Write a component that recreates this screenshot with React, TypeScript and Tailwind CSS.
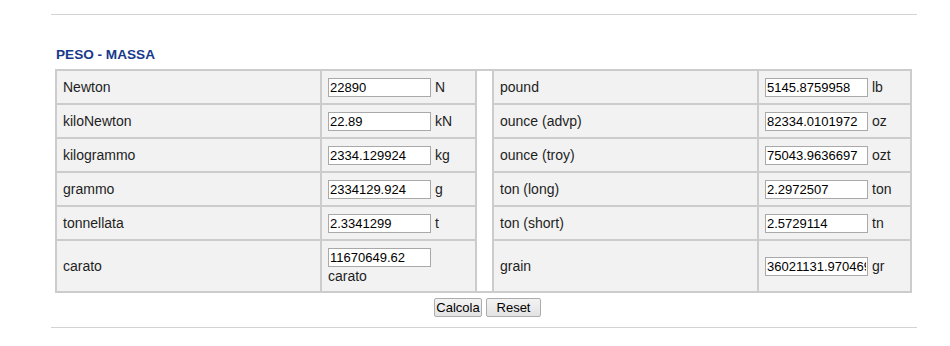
type Unit = {
  label: string;
  value: string;
  unit: string;
};

const leftUnits: Unit[] = [
  { label: "Newton", value: "22890", unit: "N" },
  { label: "kiloNewton", value: "22.89", unit: "kN" },
  { label: "kilogrammo", value: "2334.129924", unit: "kg" },
  { label: "grammo", value: "2334129.924", unit: "g" },
  { label: "tonnellata", value: "2.3341299", unit: "t" },
  { label: "carato", value: "11670649.62", unit: "carato" }
];

const rightUnits: Unit[] = [
  { label: "pound", value: "5145.8759958", unit: "lb" },
  { label: "ounce (advp)", value: "82334.0101972", unit: "oz" },
  { label: "ounce (troy)", value: "75043.9636697", unit: "ozt" },
  { label: "ton (long)", value: "2.2972507", unit: "ton" },
  { label: "ton (short)", value: "2.5729114", unit: "tn" },
  { label: "grain", value: "36021131.970469", unit: "gr" }
];

function LabelCell({ text }: { text: string }) {
  return <div className="flex items-center bg-[#f2f2f2] px-[6px]">{text}</div>;
}

function ValueCell({ value, unit }: { value: string; unit: string }) {
  return (
    <div className="flex flex-wrap content-center items-center bg-[#f2f2f2] px-[6px] leading-[18px]">
      <input
        readOnly
        value={value}
        className="mr-[4px] h-[19px] w-[103px] border border-[#a9a9a9] bg-white px-[1px] text-[13px] text-black outline-none"
      />
      <span>{unit}</span>
    </div>
  );
}

export default function App() {
  return (
    <div className="h-[346px] w-[950px] bg-white text-[14px] text-[#1e1e1e] [font-family:'Liberation_Sans',Arial,sans-serif]">
      <div className="ml-[51px] w-[866px] pt-[14px]">
        <div className="h-px bg-[#d3d3d3]" />
        <h2 className="ml-[5px] mt-[32px] text-[13.6px] font-bold leading-[15px] text-[#17398c]">
          PESO - MASSA
        </h2>
        <div className="ml-[4px] mt-[7px] grid w-[857px] grid-cols-[263px_153px_15px_263px_151px] grid-rows-[32px_32px_32px_32px_32px_50px] gap-[2px] bg-[#cccccc] p-[2px]">
          <div className="col-start-3 row-span-6 row-start-1 bg-white" />
          {leftUnits.map((left, i) => {
            const right = rightUnits[i];
            return [
              <LabelCell key={`ll${i}`} text={left.label} />,
              <ValueCell key={`lv${i}`} value={left.value} unit={left.unit} />,
              <LabelCell key={`rl${i}`} text={right.label} />,
              <ValueCell key={`rv${i}`} value={right.value} unit={right.unit} />
            ];
          })}
        </div>
        <div className="mt-[5px] flex justify-center gap-[4px] pl-[7px]">
          <button className="h-[19px] w-[48px] rounded-[2px] border border-[#adadad] bg-gradient-to-b from-[#f3f3f3] to-[#e3e3e3] text-[13px] leading-[17px] text-black">
            Calcola
          </button>
          <button className="h-[19px] w-[55px] rounded-[2px] border border-[#adadad] bg-gradient-to-b from-[#f3f3f3] to-[#e3e3e3] text-[13px] leading-[17px] text-black">
            Reset
          </button>
        </div>
        <div className="mt-[10px] h-px bg-[#d3d3d3]" />
      </div>
    </div>
  );
}
